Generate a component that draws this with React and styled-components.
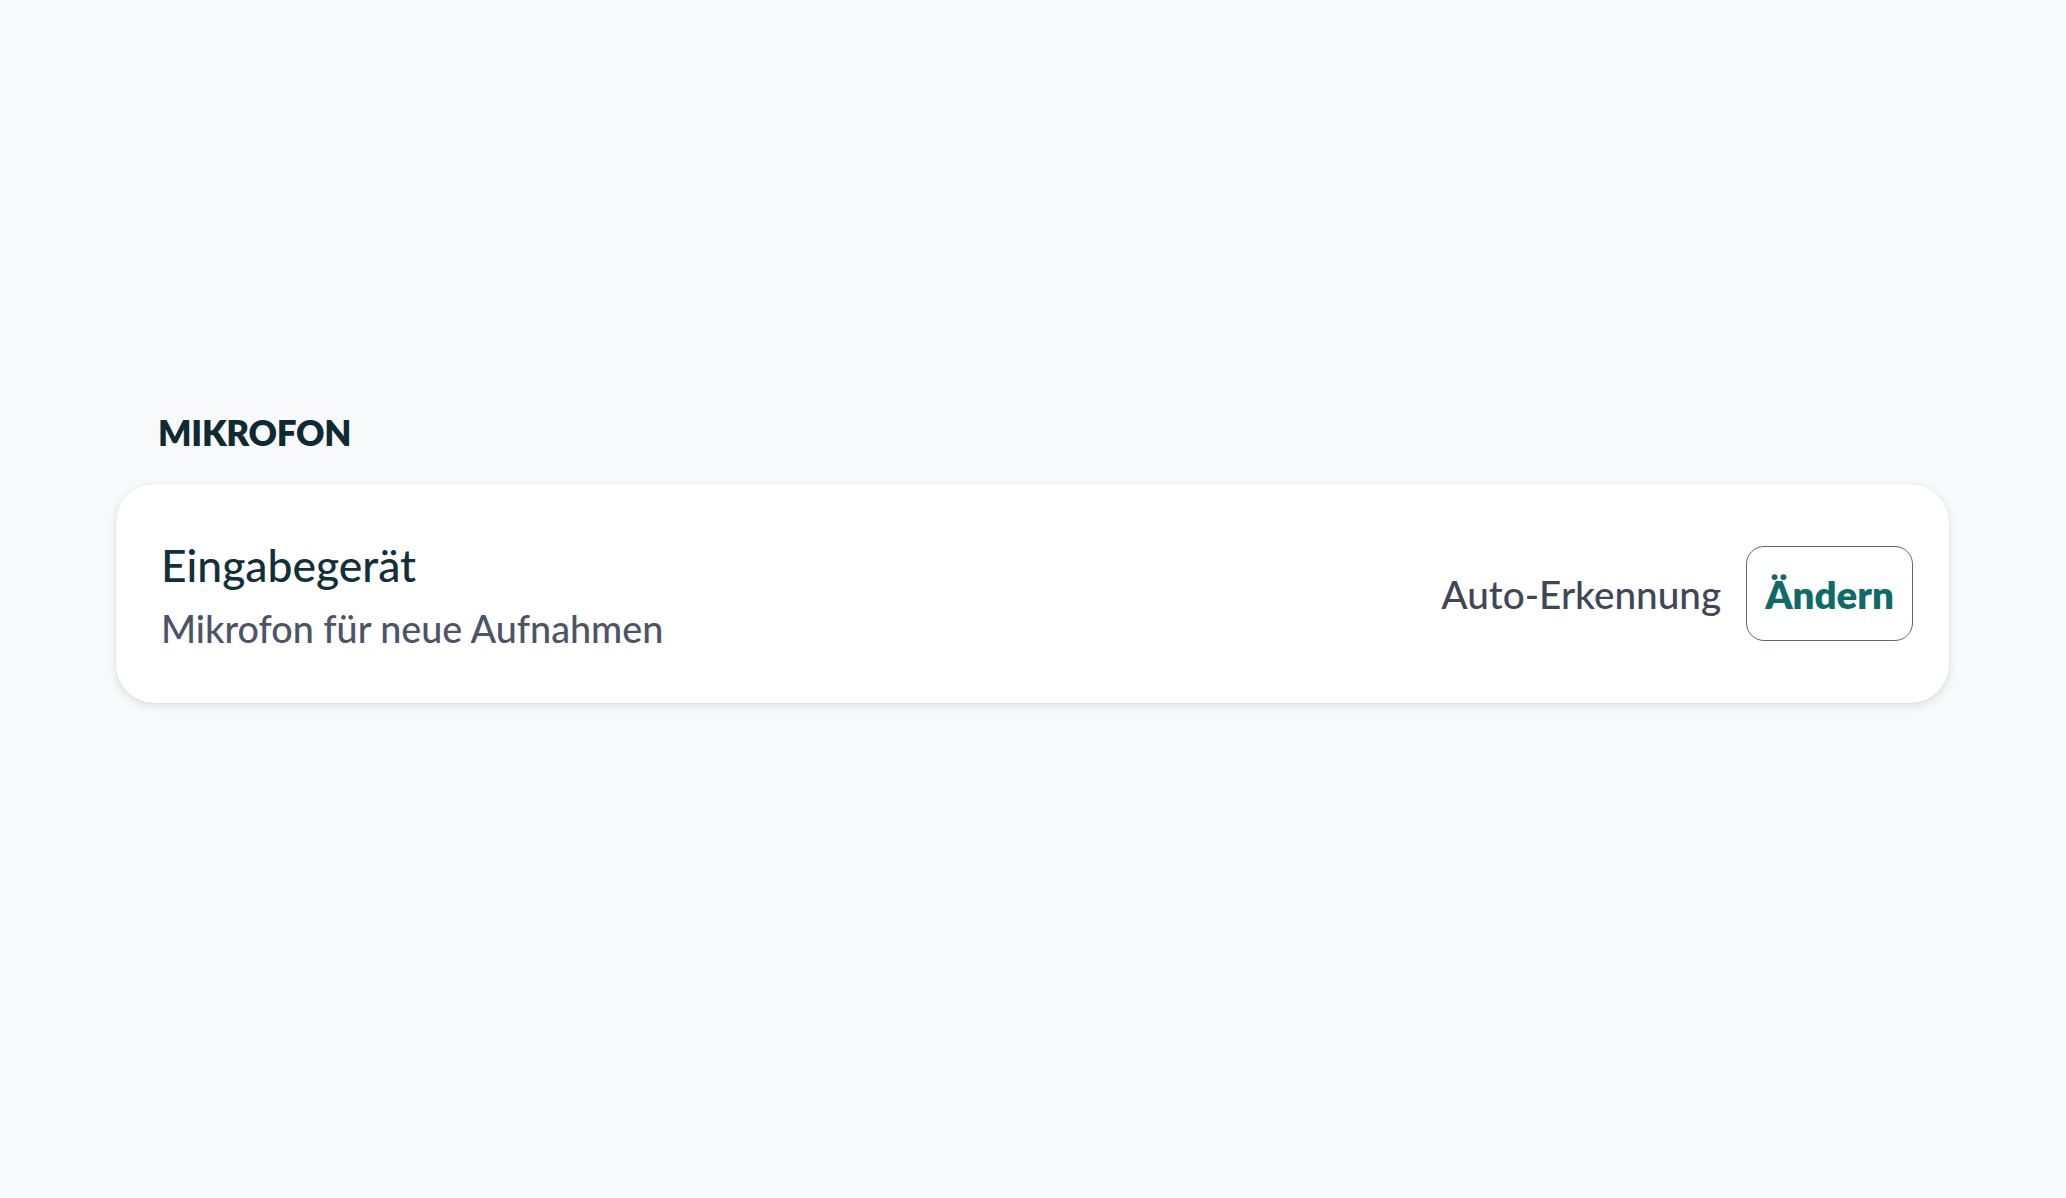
import React from "react";
import styled, { createGlobalStyle } from "styled-components";

const Global = createGlobalStyle`
  html, body { margin: 0; padding: 0; background: #f8f9fb; }
  body { font-family: Lato, "Noto Sans", sans-serif; -webkit-font-smoothing: antialiased; }
`;

const Page = styled.main`
  min-height: 1198px;
  box-sizing: border-box;
  padding: 408px 117px 0 116px;
`;

const Section = styled.section`
  display: flex;
  flex-direction: column;
  gap: 28px;
`;

const SectionLabel = styled.h2`
  margin: 0 0 0 42px;
  font-size: 35px;
  line-height: 48px;
  font-weight: 800;
  letter-spacing: -0.3px;
  color: #0f2a33;
`;

const Card = styled.div`
  display: flex;
  align-items: center;
  justify-content: space-between;
  height: 219px;
  box-sizing: border-box;
  padding: 0 36px 0 45px;
  background: #ffffff;
  border-radius: 38px;
  box-shadow: 0 3px 8px rgba(20, 30, 50, 0.12), 0 0 1px rgba(20, 30, 50, 0.12);
`;

const TextBlock = styled.div`
  display: flex;
  flex-direction: column;
  gap: 16px;
  margin-top: 4px;
`;

const Title = styled.div`
  font-size: 44.4px;
  line-height: 50px;
  font-weight: 500;
  color: #13303a;
`;

const Subtitle = styled.div`
  font-size: 37.7px;
  line-height: 46px;
  font-weight: 500;
  color: #4d5466;
`;

const Controls = styled.div`
  display: flex;
  align-items: center;
  gap: 25px;
`;

const Value = styled.span`
  font-size: 38.7px;
  font-weight: 500;
  color: #3f4658;
`;

const ChangeButton = styled.button`
  height: 95px;
  padding: 0 18px;
  border: 1.5px solid #5b6474;
  border-radius: 18px;
  background: #ffffff;
  font-family: inherit;
  font-size: 38.5px;
  font-weight: 800;
  color: #0f6a6a;
  cursor: pointer;
`;

export default function App() {
  return (
    <>
      <Global />
      <Page>
        <Section>
          <SectionLabel>MIKROFON</SectionLabel>
          <Card>
            <TextBlock>
              <Title>Eingabegerät</Title>
              <Subtitle>Mikrofon für neue Aufnahmen</Subtitle>
            </TextBlock>
            <Controls>
              <Value>Auto-Erkennung</Value>
              <ChangeButton>Ändern</ChangeButton>
            </Controls>
          </Card>
        </Section>
      </Page>
    </>
  );
}
